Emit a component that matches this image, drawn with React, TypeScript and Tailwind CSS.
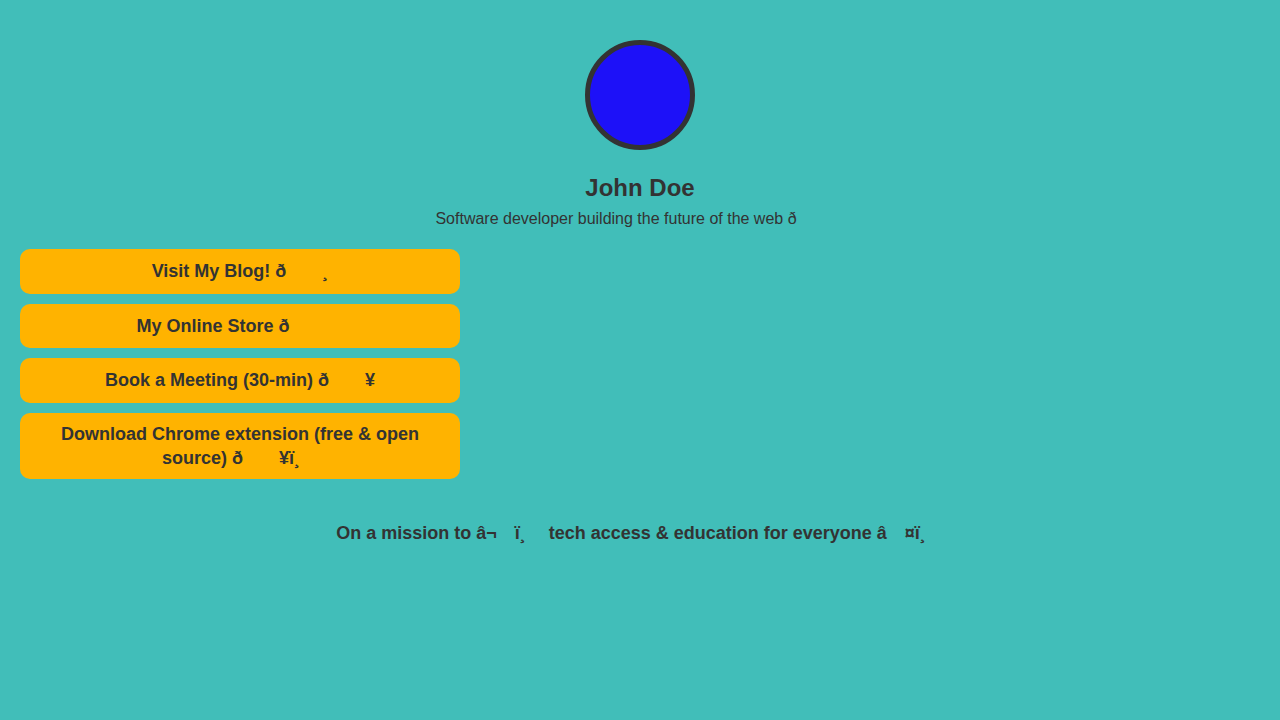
import React from 'react'

// invisible glyph slot left by a mis-decoded control byte
const Gap = () => <span className="inline-block w-[1em]" />

const LINKS: { key: string; cls: string; label: React.ReactNode }[] = [
  {
    key: 'blog',
    cls: 'py-[12px] leading-[1.15]',
    label: (
      <>
        Visit My Blog! ð<Gap />
        <Gap />¸
      </>
    ),
  },
  {
    key: 'store',
    cls: 'py-[12px] leading-[1.15]',
    label: (
      <>
        My Online Store ð<Gap />
        <Gap />
        <Gap />
      </>
    ),
  },
  {
    key: 'meeting',
    cls: 'py-[12px] leading-[1.15]',
    label: (
      <>
        Book a Meeting (30-min) ð<Gap />
        <Gap />¥
      </>
    ),
  },
  {
    key: 'extension',
    cls: 'py-[9px] leading-[24px]',
    label: (
      <>
        Download Chrome extension (free &amp; open source) ð<Gap />
        <Gap />¥ï¸<Gap />
      </>
    ),
  },
]

export default function App() {
  return (
    <div className="min-h-[720px] w-full bg-[#41beb9] text-[#333333] font-['Liberation_Sans',Arial,sans-serif] pt-[40px]">
      {/* Header */}
      <div className="flex flex-col items-center">
        <div className="w-[110px] h-[110px] rounded-full border-[5px] border-[#333333] bg-[#1d11f8]" />
        <h1 className="mt-[24px] text-[24px] leading-[1.15] font-bold">John Doe</h1>
        <p className="mt-[8px] text-[16px] leading-[1.15]">
          Software developer building the future of the web ð<Gap />
          <Gap />
          <Gap />
        </p>
      </div>

      {/* Links */}
      <div className="mt-[21px] ml-[20px] w-[440px] flex flex-col gap-[10px]">
        {LINKS.map(({ key, cls, label }) => (
          <a
            key={key}
            href="#"
            className={`block rounded-[10px] bg-[#ffb300] px-4 text-center text-[18px] font-bold ${cls}`}
          >
            {label}
          </a>
        ))}
      </div>

      {/* Footer */}
      <p className="mt-[44px] text-center text-[18px] leading-[1.15] font-bold">
        On a mission to â¬<Gap />ï¸<Gap /> tech access &amp; education for everyone â<Gap />
        ¤ï¸<Gap />
      </p>
    </div>
  )
}
